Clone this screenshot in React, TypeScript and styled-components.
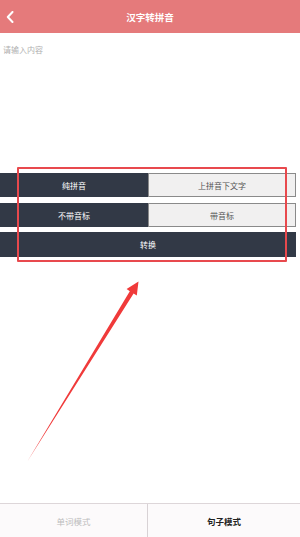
import styled, { createGlobalStyle } from 'styled-components';

const GlobalStyle = createGlobalStyle`
  html, body, #root {
    margin: 0;
    padding: 0;
    height: 100%;
  }
  body {
    font-family: "Liberation Sans", "Noto Sans CJK SC", sans-serif;
    background: #ffffff;
  }
`;

const App = () => {
  return (
    <Page>
      <GlobalStyle />
      <Header>
        <BackButton>
          <svg width="8" height="12" viewBox="0 0 8 12">
            <path d="M6.5 1 L1.8 6 L6.5 11" fill="none" stroke="#ffffff" strokeWidth="2" strokeLinecap="round" strokeLinejoin="round" />
          </svg>
        </BackButton>
        <Title>汉字转拼音</Title>
      </Header>
      <Input placeholder="请输入内容" />
      <Options>
        <OptionRow>
          <Cell $active>纯拼音</Cell>
          <Cell>上拼音下文字</Cell>
        </OptionRow>
        <OptionRow>
          <Cell $active>不带音标</Cell>
          <Cell>带音标</Cell>
        </OptionRow>
        <ConvertButton>转换</ConvertButton>
      </Options>
      <TabBar>
        <Tab>单词模式</Tab>
        <Tab $active>句子模式</Tab>
      </TabBar>

      <Highlight />
      <Arrow width="300" height="537" viewBox="0 0 300 537">
        <polygon
          points="27,462 133.6,293.6 136.8,295.4 138.5,281.5 126.6,289 129.8,291.2"
          fill="#f03a3a"
        />
      </Arrow>
    </Page>
  );
};

const Page = styled.div`
  position: relative;
  display: flex;
  flex-direction: column;
  width: 300px;
  height: 537px;
  overflow: hidden;
  background: #ffffff;
`;

const Header = styled.div`
  position: relative;
  display: flex;
  align-items: center;
  justify-content: center;
  height: 33px;
  background: #e57a7b;
  flex-shrink: 0;
`;

const BackButton = styled.div`
  position: absolute;
  left: 6px;
  top: 11px;
  display: flex;
`;

const Title = styled.span`
  color: #ffffff;
  font-size: 9.5px;
  font-weight: 700;
`;

const Input = styled.textarea`
  display: block;
  height: 140px;
  padding: 13px 3px 0;
  margin: 0;
  border: none;
  outline: none;
  resize: none;
  box-sizing: border-box;
  width: 100%;
  font-family: "Liberation Sans", "Noto Sans CJK SC", sans-serif;
  font-size: 8px;
  line-height: 10px;
  color: #333;
  background: #ffffff;

  &::placeholder {
    color: #b0b0b0;
  }
`;

const Options = styled.div`
  display: flex;
  flex-direction: column;
  gap: 6px;
  width: 296px;
`;

const OptionRow = styled.div`
  display: grid;
  grid-template-columns: 148px 148px;
  height: 24px;
`;

const Cell = styled.div<{ $active?: boolean }>`
  display: flex;
  align-items: center;
  justify-content: center;
  box-sizing: border-box;
  font-size: 8px;
  color: ${(p) => (p.$active ? '#ffffff' : '#555')};
  background: ${(p) => (p.$active ? '#323946' : '#f1f0f0')};
  border: 1px solid ${(p) => (p.$active ? '#323946' : '#8a8a8a')};
`;

const ConvertButton = styled.div`
  display: flex;
  align-items: center;
  justify-content: center;
  height: 25px;
  margin-top: -1px;
  background: #323946;
  color: #ffffff;
  font-size: 8px;
`;

const TabBar = styled.div`
  display: grid;
  grid-template-columns: 147px 1fr;
  height: 33px;
  margin-top: auto;
  border-top: 1px solid #ddd6d9;
  background: #fcfafb;
  flex-shrink: 0;
`;

const Tab = styled.div<{ $active?: boolean }>`
  display: flex;
  align-items: center;
  justify-content: center;
  font-size: 8.5px;
  font-weight: ${(p) => (p.$active ? 700 : 400)};
  color: ${(p) => (p.$active ? '#222' : '#bdbdbd')};

  & + & {
    border-left: 1px solid #d8d2d5;
  }
`;

const Highlight = styled.div`
  position: absolute;
  left: 17px;
  top: 167px;
  width: 270px;
  height: 95px;
  box-sizing: border-box;
  border: 2px solid #e8494d;
  border-radius: 1px;
  pointer-events: none;
`;

const Arrow = styled.svg`
  position: absolute;
  left: 0;
  top: 0;
  pointer-events: none;
`;

export default App;
